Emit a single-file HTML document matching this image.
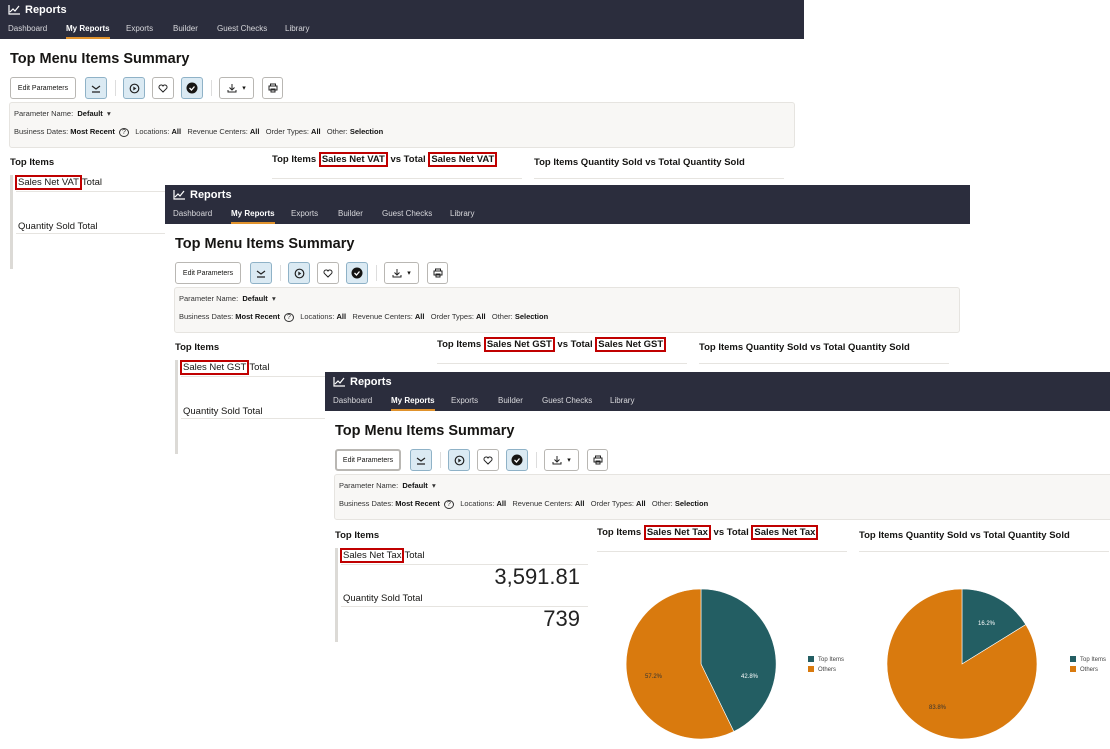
<!DOCTYPE html>
<html><head><meta charset="utf-8"><style>
*{box-sizing:border-box;margin:0;padding:0}
body{width:1110px;height:749px;position:relative;overflow:hidden;background:#fff;font-family:"Liberation Sans",sans-serif;color:#161513}
.p{position:absolute;background:#fff;overflow:hidden}
.hd{position:absolute;left:0;top:0;right:0;height:39px;background:#2b2d3d;color:#fff}
.hd .t{position:absolute;left:8px;top:4px;font-size:11px;font-weight:bold;display:flex;align-items:center;gap:5px}
.nav{position:absolute;top:22px;left:0;font-size:8px;color:#d8d8dc}
.nav span{position:absolute;top:0;white-space:nowrap;height:17px;line-height:13px}
.nav .a{color:#fff;font-weight:bold;border-bottom:2px solid #e0922c}
.ab{position:absolute;white-space:nowrap}
.ttl{left:10px;top:51px;font-size:14.5px;font-weight:bold}
.btn{position:absolute;top:77px;height:22px;border:1px solid #b9b7b3;border-radius:3px;background:#fff;display:flex;align-items:center;justify-content:center;font-size:7px}
.bl{background:#dbeaf3;border-color:#8fb2c7}
.dv{position:absolute;top:80px;width:1px;height:16px;background:#ddd}
.pb{position:absolute;left:9px;top:102px;width:786px;height:46px;background:#f8f7f5;border:1px solid #e6e4e0;border-radius:3px;font-size:7.5px;color:#333}
.pb b{color:#111}
.sec{font-size:9.5px;font-weight:bold}
.ul{position:absolute;height:1px;background:#e6e4e0}
.rb{border:2px solid #c00000;padding:0 1px}
.box{position:absolute;left:10px;top:175px;width:250px;height:94px;border-left:3px solid #dcdad6}
.lbl{position:absolute;left:5px;font-size:9.5px}
.val{position:absolute;right:5px;font-size:22px;color:#222}
.leg{position:absolute;font-size:6px;color:#444;line-height:10px}
.leg i{display:inline-block;width:6px;height:6px;margin-right:4px;vertical-align:-1px}
</style></head><body>

<!-- PANEL 1 -->
<div class="p" style="left:0;top:0;width:804px;height:290px">
 <div class="hd"><div class="t"><svg width="12" height="10" viewBox="0 0 12 10"><path d="M1 0v9h11M2 7l3-3 2 2 4-5" stroke="#fff" fill="none" stroke-width="1.2"/></svg>Reports</div>
 <div class="nav"><span style="left:8px">Dashboard</span><span class="a" style="left:66px">My Reports</span><span style="left:126px">Exports</span><span style="left:173px">Builder</span><span style="left:217px">Guest Checks</span><span style="left:285px">Library</span></div></div>
 <div class="ab ttl">Top Menu Items Summary</div>
 <div class="btn" style="left:10px;width:66px">Edit Parameters</div>
 <div class="btn bl" style="left:85px;width:22px"><svg width="10" height="9"><path d="M1 2l4 3 4-3M1 8h8" stroke="#222" fill="none" stroke-width="1.2"/></svg></div>
 <div class="dv" style="left:115px"></div>
 <div class="btn bl" style="left:123px;width:22px"><svg width="11" height="11"><circle cx="5.5" cy="5.5" r="4.3" stroke="#222" fill="none" stroke-width="1.2"/><path d="M4.3 3.5v4l3-2z" fill="#222"/></svg></div>
 <div class="btn" style="left:152px;width:22px"><svg width="10" height="9"><path d="M5 8L1.3 4.3A2 2 0 0 1 5 2a2 2 0 0 1 3.7 2.3z" stroke="#222" fill="none"/></svg></div>
 <div class="btn bl" style="left:181px;width:22px"><svg width="12" height="12"><circle cx="6" cy="6" r="5.5" fill="#161513"/><path d="M3.5 6l2 2 3-3.5" stroke="#fff" fill="none" stroke-width="1.3"/></svg></div>
 <div class="dv" style="left:211px"></div>
 <div class="btn" style="left:219px;width:35px;gap:5px"><svg width="10" height="10"><path d="M5 1v6M2.5 4.5L5 7l2.5-2.5M1 7v2h8V7" stroke="#222" fill="none"/></svg>▾</div>
 <div class="btn" style="left:262px;width:21px"><svg width="10" height="10"><path d="M2.5 3V1h5v2M1 3h8v4H1zM3 6h4v3H3z" stroke="#222" fill="#fff"/></svg></div>
 <div class="pb"><div class="ab" style="left:4px;top:6px">Parameter Name:&nbsp; <b>Default</b>&nbsp; ▾</div><div class="ab" style="left:4px;top:24px">Business Dates: <b>Most Recent</b>&nbsp; <span style="border:1px solid #333;border-radius:50%;padding:0 2px;font-size:7px">?</span>&nbsp;&nbsp; Locations: <b>All</b>&nbsp;&nbsp; Revenue Centers: <b>All</b>&nbsp;&nbsp; Order Types: <b>All</b>&nbsp;&nbsp; Other: <b>Selection</b></div></div>
 <div class="ab sec" style="left:10px;top:157px">Top Items</div>
 <div class="ab sec" style="left:272px;top:152px;line-height:16px">Top Items <span class="rb">Sales Net VAT</span> vs Total <span class="rb">Sales Net VAT</span></div>
 <div class="ab sec" style="left:534px;top:157px">Top Items Quantity Sold vs Total Quantity Sold</div>
 <div class="ul" style="left:272px;top:178px;width:250px"></div><div class="ul" style="left:534px;top:178px;width:250px"></div>
 <div class="box"><div class="lbl" style="top:2px"><span class="rb" style="margin-left:-3px">Sales Net VAT</span>Total</div><div class="ul" style="left:3px;top:16px;width:247px"></div>
 <div class="lbl" style="top:46px">Quantity Sold Total</div><div class="ul" style="left:3px;top:58px;width:247px"></div></div>
</div>

<!-- PANEL 2 -->
<div class="p" style="left:165px;top:185px;width:805px;height:272px">
 <div class="hd"><div class="t"><svg width="12" height="10" viewBox="0 0 12 10"><path d="M1 0v9h11M2 7l3-3 2 2 4-5" stroke="#fff" fill="none" stroke-width="1.2"/></svg>Reports</div>
 <div class="nav"><span style="left:8px">Dashboard</span><span class="a" style="left:66px">My Reports</span><span style="left:126px">Exports</span><span style="left:173px">Builder</span><span style="left:217px">Guest Checks</span><span style="left:285px">Library</span></div></div>
 <div class="ab ttl">Top Menu Items Summary</div>
 <div class="btn" style="left:10px;width:66px">Edit Parameters</div>
 <div class="btn bl" style="left:85px;width:22px"><svg width="10" height="9"><path d="M1 2l4 3 4-3M1 8h8" stroke="#222" fill="none" stroke-width="1.2"/></svg></div>
 <div class="dv" style="left:115px"></div>
 <div class="btn bl" style="left:123px;width:22px"><svg width="11" height="11"><circle cx="5.5" cy="5.5" r="4.3" stroke="#222" fill="none" stroke-width="1.2"/><path d="M4.3 3.5v4l3-2z" fill="#222"/></svg></div>
 <div class="btn" style="left:152px;width:22px"><svg width="10" height="9"><path d="M5 8L1.3 4.3A2 2 0 0 1 5 2a2 2 0 0 1 3.7 2.3z" stroke="#222" fill="none"/></svg></div>
 <div class="btn bl" style="left:181px;width:22px"><svg width="12" height="12"><circle cx="6" cy="6" r="5.5" fill="#161513"/><path d="M3.5 6l2 2 3-3.5" stroke="#fff" fill="none" stroke-width="1.3"/></svg></div>
 <div class="dv" style="left:211px"></div>
 <div class="btn" style="left:219px;width:35px;gap:5px"><svg width="10" height="10"><path d="M5 1v6M2.5 4.5L5 7l2.5-2.5M1 7v2h8V7" stroke="#222" fill="none"/></svg>▾</div>
 <div class="btn" style="left:262px;width:21px"><svg width="10" height="10"><path d="M2.5 3V1h5v2M1 3h8v4H1zM3 6h4v3H3z" stroke="#222" fill="#fff"/></svg></div>
 <div class="pb"><div class="ab" style="left:4px;top:6px">Parameter Name:&nbsp; <b>Default</b>&nbsp; ▾</div><div class="ab" style="left:4px;top:24px">Business Dates: <b>Most Recent</b>&nbsp; <span style="border:1px solid #333;border-radius:50%;padding:0 2px;font-size:7px">?</span>&nbsp;&nbsp; Locations: <b>All</b>&nbsp;&nbsp; Revenue Centers: <b>All</b>&nbsp;&nbsp; Order Types: <b>All</b>&nbsp;&nbsp; Other: <b>Selection</b></div></div>
 <div class="ab sec" style="left:10px;top:157px">Top Items</div>
 <div class="ab sec" style="left:272px;top:152px;line-height:16px">Top Items <span class="rb">Sales Net GST</span> vs Total <span class="rb">Sales Net GST</span></div>
 <div class="ab sec" style="left:534px;top:157px">Top Items Quantity Sold vs Total Quantity Sold</div>
 <div class="ul" style="left:272px;top:178px;width:250px"></div><div class="ul" style="left:534px;top:178px;width:250px"></div>
 <div class="box"><div class="lbl" style="top:2px"><span class="rb" style="margin-left:-3px">Sales Net GST</span>Total</div><div class="ul" style="left:3px;top:16px;width:247px"></div>
 <div class="lbl" style="top:46px">Quantity Sold Total</div><div class="ul" style="left:3px;top:58px;width:247px"></div></div>
</div>

<!-- PANEL 3 -->
<div class="p" style="left:325px;top:372px;width:785px;height:377px">
 <div class="hd"><div class="t"><svg width="12" height="10" viewBox="0 0 12 10"><path d="M1 0v9h11M2 7l3-3 2 2 4-5" stroke="#fff" fill="none" stroke-width="1.2"/></svg>Reports</div>
 <div class="nav"><span style="left:8px">Dashboard</span><span class="a" style="left:66px">My Reports</span><span style="left:126px">Exports</span><span style="left:173px">Builder</span><span style="left:217px">Guest Checks</span><span style="left:285px">Library</span></div></div>
 <div class="ab ttl">Top Menu Items Summary</div>
 <div class="btn" style="left:10px;width:66px;border-width:2px">Edit Parameters</div>
 <div class="btn bl" style="left:85px;width:22px"><svg width="10" height="9"><path d="M1 2l4 3 4-3M1 8h8" stroke="#222" fill="none" stroke-width="1.2"/></svg></div>
 <div class="dv" style="left:115px"></div>
 <div class="btn bl" style="left:123px;width:22px"><svg width="11" height="11"><circle cx="5.5" cy="5.5" r="4.3" stroke="#222" fill="none" stroke-width="1.2"/><path d="M4.3 3.5v4l3-2z" fill="#222"/></svg></div>
 <div class="btn" style="left:152px;width:22px"><svg width="10" height="9"><path d="M5 8L1.3 4.3A2 2 0 0 1 5 2a2 2 0 0 1 3.7 2.3z" stroke="#222" fill="none"/></svg></div>
 <div class="btn bl" style="left:181px;width:22px"><svg width="12" height="12"><circle cx="6" cy="6" r="5.5" fill="#161513"/><path d="M3.5 6l2 2 3-3.5" stroke="#fff" fill="none" stroke-width="1.3"/></svg></div>
 <div class="dv" style="left:211px"></div>
 <div class="btn" style="left:219px;width:35px;gap:5px"><svg width="10" height="10"><path d="M5 1v6M2.5 4.5L5 7l2.5-2.5M1 7v2h8V7" stroke="#222" fill="none"/></svg>▾</div>
 <div class="btn" style="left:262px;width:21px"><svg width="10" height="10"><path d="M2.5 3V1h5v2M1 3h8v4H1zM3 6h4v3H3z" stroke="#222" fill="#fff"/></svg></div>
 <div class="pb" style="width:790px"><div class="ab" style="left:4px;top:6px">Parameter Name:&nbsp; <b>Default</b>&nbsp; ▾</div><div class="ab" style="left:4px;top:24px">Business Dates: <b>Most Recent</b>&nbsp; <span style="border:1px solid #333;border-radius:50%;padding:0 2px;font-size:7px">?</span>&nbsp;&nbsp; Locations: <b>All</b>&nbsp;&nbsp; Revenue Centers: <b>All</b>&nbsp;&nbsp; Order Types: <b>All</b>&nbsp;&nbsp; Other: <b>Selection</b></div></div>
 <div class="ab sec" style="left:10px;top:158px">Top Items</div>
 <div class="ab sec" style="left:272px;top:153px;line-height:16px">Top Items <span class="rb">Sales Net Tax</span> vs Total <span class="rb">Sales Net Tax</span></div>
 <div class="ab sec" style="left:534px;top:158px">Top Items Quantity Sold vs Total Quantity Sold</div>
 <div class="ul" style="left:272px;top:179px;width:250px"></div><div class="ul" style="left:534px;top:179px;width:250px"></div>
 <div class="box" style="top:176px"><div class="lbl" style="top:2px"><span class="rb" style="margin-left:-3px">Sales Net Tax</span>Total</div><div class="ul" style="left:3px;top:16px;width:247px"></div>
 <div class="val" style="top:16px">3,591.81</div>
 <div class="lbl" style="top:45px">Quantity Sold Total</div><div class="ul" style="left:3px;top:58px;width:247px"></div>
 <div class="val" style="top:58px">739</div></div>
 <svg class="ab" style="left:0;top:0" width="785" height="377">
  <path d="M376 292V217A75 75 0 0 1 408.8 359.5Z" fill="#235e63" stroke="#fff" stroke-width=".6"/>
  <path d="M376 292L408.8 359.5A75 75 0 1 1 376 217Z" fill="#d97a0e" stroke="#fff" stroke-width=".6"/>
  <text x="416" y="306" font-size="6" fill="#fff" font-family="Liberation Sans">42.8%</text>
  <text x="320" y="306" font-size="6" fill="#333" font-family="Liberation Sans">57.2%</text>
  <path d="M637 292V217A75 75 0 0 1 700.8 252.6Z" fill="#235e63" stroke="#fff" stroke-width=".6"/>
  <path d="M637 292L700.8 252.6A75 75 0 1 1 637 217Z" fill="#d97a0e" stroke="#fff" stroke-width=".6"/>
  <text x="653" y="253" font-size="6" fill="#fff" font-family="Liberation Sans">16.2%</text>
  <text x="604" y="337" font-size="6" fill="#333" font-family="Liberation Sans">83.8%</text>
 </svg>
 <div class="leg" style="left:483px;top:283px"><i style="background:#235e63"></i>Top Items<br><i style="background:#d97a0e"></i>Others</div>
 <div class="leg" style="left:745px;top:283px"><i style="background:#235e63"></i>Top Items<br><i style="background:#d97a0e"></i>Others</div>
</div>
</body></html>
